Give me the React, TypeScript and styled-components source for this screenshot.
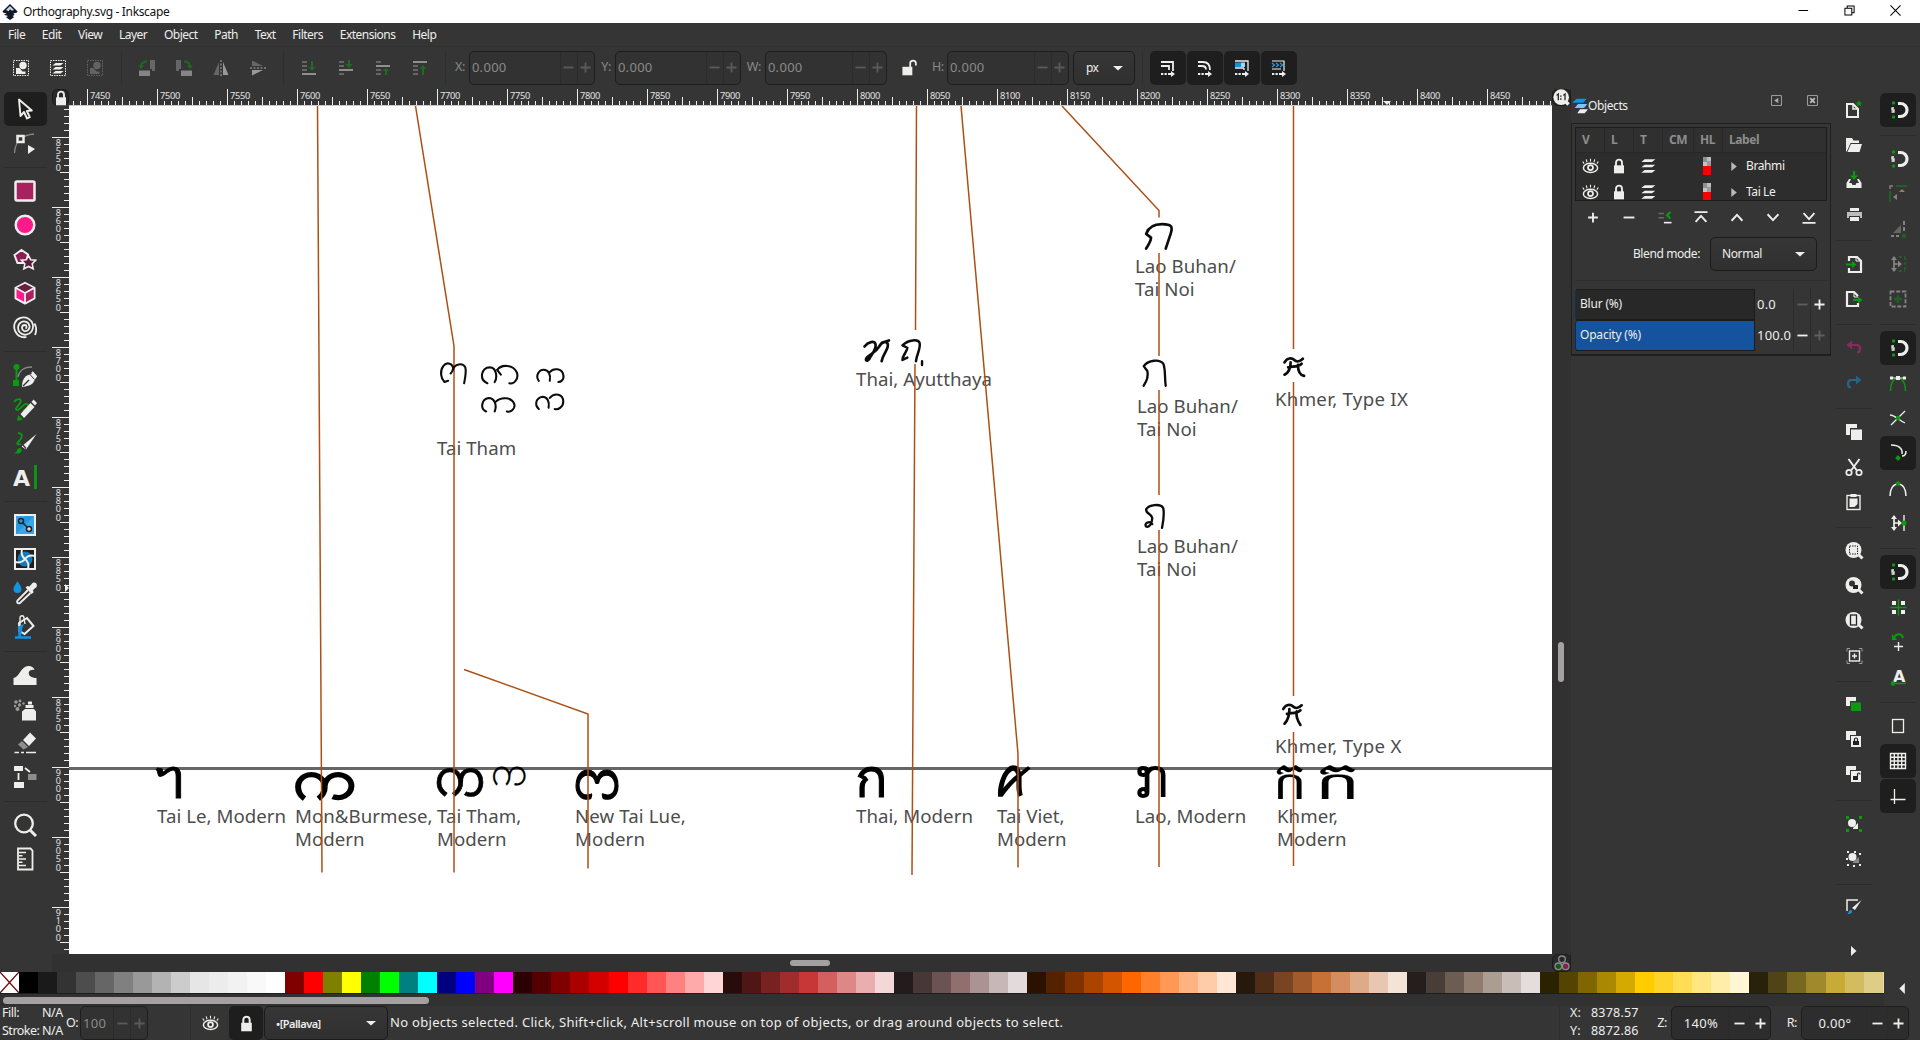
import React from "react";
import styled, { createGlobalStyle, css } from "styled-components";

const GlobalStyle = createGlobalStyle`
  * { box-sizing: border-box; }
  body { margin: 0; background: #353535; overflow: hidden; }
`;

const UI = `"Noto Sans", "Open Sans", sans-serif`;
const W = "#eeeeec";
const GR = "#0a9a10";
const DIM = "#6a6a6a";

const Window = styled.div`
  width: 1920px; height: 1040px; display: flex; flex-direction: column;
  background: #353535; color: ${W}; font: 12px/1 ${UI}; letter-spacing: -0.4px; overflow: hidden; white-space: nowrap;
`;
const Ico = styled.svg<{ $s?: number; $dim?: boolean }>`
  display: block; flex: none; width: ${p => p.$s ?? 24}px; height: ${p => p.$s ?? 24}px;
  opacity: ${p => (p.$dim ? 0.42 : 1)}; fill: none; stroke: none;
`;
const I = ({ s, dim, children }: { s?: number; dim?: boolean; children: React.ReactNode }) => (
  <Ico viewBox="0 0 24 24" $s={s} $dim={dim}>{children}</Ico>
);

/* ---------- title and menu ---------- */
const TitleBar = styled.header`
  height: 23px; flex: none; background: #fff; color: #111; display: flex; align-items: center; padding-left: 2px; letter-spacing: -0.350px;
`;
const TitleText = styled.span`margin-left: 5px; flex: 1;`;
const WinButton = styled.div`width: 46px; height: 23px; display: flex; align-items: center; justify-content: center; padding: 0 3px 3px 0;`;
const MenuBar = styled.nav`
  height: 24px; flex: none; display: flex; align-items: center; gap: 16.650px; padding-left: 8px; border-bottom: 1px solid #303030;
  letter-spacing: -0.500px;
`;

/* ---------- tool controls bar ---------- */
const ControlBar = styled.div`height: 42px; flex: none; display: flex; align-items: center; padding: 0 0 1px 2px;`;
const Slot = styled.div<{ $w: number }>`width: ${p => p.$w}px; display: flex; justify-content: center; flex: none;`;
const VSep = styled.div<{ $l?: number; $r?: number; $h?: number }>`
  width: 1px; height: ${p => p.$h ?? 34}px; background: #2e2e2e; flex: none; margin: 0 ${p => p.$r ?? 7}px 0 ${p => p.$l ?? 7}px;
`;
const SpinBox = styled.div<{ $w: number; $dim?: boolean; $fill?: boolean }>`
  width: ${p => p.$w}px; height: 34px; flex: none; display: flex; align-items: stretch; border: 1px solid #1e1e1e; border-radius: 5px;
  background: ${p => (p.$fill ? "#2d2d2d" : "#323232")}; color: ${p => (p.$dim ? "#8a8a89" : W)}; font-size: 13px; letter-spacing: 0.3px;
`;
const SpinValue = styled.span<{ $center?: boolean }>`
  flex: 1; display: flex; align-items: center; padding-left: 2px; justify-content: ${p => (p.$center ? "center" : "flex-start")};
`;
const SpinKey = styled.span<{ $w: number }>`
  width: ${p => p.$w}px; display: flex; align-items: center; justify-content: center; border-left: 1px solid #2b2b2b;
`;
const FieldLabel = styled.label<{ $w: number; $dim?: boolean }>`
  width: ${p => p.$w}px; flex: none; text-align: right; padding-right: 4px; font-size: 12.5px; color: ${p => (p.$dim ? "#8a8a89" : W)};
`;
const Combo = styled.div<{ $w: number; $pad?: number }>`
  width: ${p => p.$w}px; height: 34px; flex: none; display: flex; align-items: center; justify-content: space-between;
  padding: 0 11px 0 ${p => p.$pad ?? 12}px; border: 1px solid #1b1b1b; border-radius: 5px; background: linear-gradient(#363636, #303030);
`;
const Toggle = styled.div<{ $w: number; $h: number }>`
  width: ${p => p.$w}px; height: ${p => p.$h}px; flex: none; display: flex; align-items: center; justify-content: center;
  border-radius: 5px; background: #1e1e1e;
`;
const ToggleRow = styled.div`display: flex; gap: 1px;`;

const Minus = ({ c = W }: { c?: string }) => <I s={11}><path d="M1 12h22" stroke={c} strokeWidth="4" /></I>;
const Plus = ({ c = W }: { c?: string }) => <I s={11}><path d="M1 12h22M12 1v22" stroke={c} strokeWidth="4" /></I>;
const Down = () => <I s={10}><path d="M0 7h24L12 18z" fill={W} /></I>;
const Spin = ({ w, v, kw, dim, center, fill }: { w: number; v: string; kw: number; dim?: boolean; center?: boolean; fill?: boolean }) => (
  <SpinBox $w={w} $dim={dim} $fill={fill}>
    <SpinValue $center={center}>{v}</SpinValue>
    <SpinKey $w={kw}><Minus c={dim ? "#5a5a5a" : W} /></SpinKey>
    <SpinKey $w={kw}><Plus c={dim ? "#5a5a5a" : W} /></SpinKey>
  </SpinBox>
);

const SelAll = () => <><rect x="4.500" y="4.500" width="15" height="15" stroke={W} strokeDasharray="1.500 1" /><circle cx="14" cy="9.500" r="3.700" fill={W} /><path d="M7 12h3.500l3 3.500h3v2.500H7z" fill={W} /></>;
const topIcons1 = [
  <I><SelAll /></I>,
  <I><rect x="4.500" y="4.500" width="15" height="15" stroke={W} strokeDasharray="1.500 1" /><path d="M9.500 7h8l-3 2.500h-8zM9.500 11h8l-3 2.500h-8zM9.500 15h8l-3 2.500h-8z" fill={W} /></I>,
  <I dim><g opacity=".6"><SelAll /></g></I>,
];
const rotL = <><path d="M4 14.500h11V20H4z" fill="#858585" /><path d="M15 4h5v11h-3v-2h-2z" fill="#666" /><path d="M6 11c0-4 2-5.500 6-5.500" stroke="#1d6a22" strokeWidth="2" /><path d="M3 9.500h6.500L6 13z" fill="#1d6a22" /></>;
const topIcons2 = [
  <I>{rotL}</I>,
  <I><g transform="matrix(-1 0 0 1 24 0)">{rotL}</g></I>,
  <I><path d="M10 6v13H4.500z" fill="#666" /><path d="M14 6v13h5.500z" fill="#999" /><path d="M12 4v16" stroke="#aaa" strokeDasharray="2 1.500" /></I>,
  <I><path d="M6 4.500V10h11z" fill="#666" /><path d="M6 19.500V14h11z" fill="#999" /><path d="M4 12h17" stroke="#aaa" strokeDasharray="2 1.500" /></I>,
];
const stack = (a: string, b: string, arrow: string) => <I><path d={b} fill="#666" /><path d={a} fill="#8f8f8f" /><path d={arrow} fill="#1f6a24" /></I>;
const topIcons3 = [
  stack("M5 17h14v2H5z", "M5 5h5v2H5zM5 9h5v2H5zM5 13h5v2H5z", "M14 5h2v6h2.500L15 15l-3.500-4H14z"),
  stack("M5 13h14v2H5z", "M5 5h5v2H5zM5 9h5v2H5zM5 17h5v2H5z", "M14 4h2v4h2.500L15 12l-3.500-4H14z"),
  stack("M5 9h14v2H5z", "M5 5h5v2H5zM5 13h5v2H5zM5 17h5v2H5z", "M14 19h2v-4h2.500L15 12l-3.500 3H14z"),
  stack("M5 5h14v2H5z", "M5 9h5v2H5zM5 13h5v2H5zM5 17h5v2H5z", "M14 19h2v-6h2.500L15 9l-3.500 4H14z"),
];
const dots = <><path d="M5 17h2.300v2H5zM8.500 17h2.300v2H8.500z" fill={W} /><path d="M12 17h3v-2l4 3-4 3v-2h-3z" fill={W} /></>;
const affect = [
  <I><path d="M5 6h12v9M5 10h8v4" stroke={W} strokeWidth="1.800" />{dots}</I>,
  <I><path d="M5 6h5c5 0 7 3 7 8M5 10h4c3 0 4 1.500 4 3.500" stroke={W} strokeWidth="1.800" />{dots}</I>,
  <I><path d="M5 5h13v10M14 12v2M5 12h9" stroke={W} strokeWidth="1.300" /><rect x="5" y="6.500" width="6" height="4.500" fill="#1193e0" /><rect x="11" y="6.500" width="4" height="4.500" fill="#9fd3f2" />{dots}</I>,
  <I><path d="M5 5h12v10M5 13h9" stroke={W} strokeWidth="1.200" /><path d="M5 7l2.500 2L5 11M9 7l2.500 2L9 11M13 7l2.500 2L13 11" stroke="#2b9be8" strokeWidth="1.200" />{dots}</I>,
];

/* ---------- main area ---------- */
const Main = styled.main`flex: 1; display: flex; min-height: 0;`;
const Toolbox = styled.aside`width: 52px; flex: none; display: flex; flex-direction: column; padding: 3px 0 0 4px;`;
const ToolButton = styled.div<{ $on?: boolean }>`
  width: 43px; height: 34px; flex: none; display: flex; align-items: center; justify-content: center; border-radius: 5px; padding-right: 1px;
  ${p => p.$on && css`background: #1e1e1e;`}
`;
const HSep = styled.div<{ $w?: number }>`
  width: ${p => p.$w ?? 43}px; height: 14px; flex: none; display: flex; align-items: center;
  &::after { content: ""; flex: 1; height: 1px; background: #2c2c2c; }
`;
const ColGap = styled.div`height: 8px; flex: none;`;

const tools: (React.ReactNode | null)[] = [
  <I><path d="M6 2.500L7.500 19l3.500-4 3 6.500 2.800-1.300-3-6.200 5-.5z" stroke={W} strokeWidth="1.900" strokeLinejoin="round" /></I>,
  <I><path d="M1.500 22C2 11 9 4 21 3" stroke="#888" strokeWidth="1.300" /><rect x="4.500" y="5" width="6" height="6" stroke={W} strokeWidth="2.500" fill="#353535" /><path d="M15 14l7 4-7 5z" fill={W} /></I>,
  null,
  <I><rect x="2.500" y="2.500" width="19" height="19" rx="1.500" fill="#a8225f" stroke={W} strokeWidth="2.500" /></I>,
  <I><circle cx="12" cy="12" r="9.300" fill="#ff1a8c" stroke={W} strokeWidth="2.500" /></I>,
  <I><path d="M8.500 3L15 7.500 13 16H4.500L1.500 8z" fill="#8c1d56" stroke={W} strokeWidth="2" /><path d="M15.500 8.500l2.200 4.200 5 .5-3.500 3.600 1 5-4.700-2.300-4.600 2.300.9-5-3.500-3.600 5-.5z" fill="#5c1c3e" stroke={W} strokeWidth="1.600" /></I>,
  <I><path d="M12 1.800l9.500 5v10.500L12 22.500l-9.500-5.200V6.800z" fill="#ff1a8c" stroke={W} strokeWidth="2" strokeLinejoin="round" /><path d="M12 2.800l8.500 4.200L12 11.500 3.500 7z" fill="#6a1f45" /><path d="M13 12.500l7.500-4v8.300L13 21z" fill="#a8225f" /><path d="M3 7l9 5 9-5M12 12v10" stroke={W} strokeWidth="1.800" /></I>,
  <I><path d="M12.500 13.500c1.500-.5 1.500-3.500-.8-3.500-3.200 0-3.700 4.500-.7 5.800 3.500 1.200 6-1.800 5.500-4.800C15.800 7 11.500 5.500 8.500 7 4.500 9 4 14.500 7 17.700 10.500 21 16 20 18.500 16.500c3-4.500 1.500-10-3-12.700C10.500 1 4 2.800 1.800 8 0 13 2.500 19.500 7.500 21.500c2 .8 4 1 6 .5M22 20c1.500-3.500 1.500-8-.5-11.500" stroke={W} strokeWidth="1.800" /></I>,
  null,
  <I><path d="M3.500 5v14" stroke={GR} strokeWidth="2" /><circle cx="3.500" cy="4" r="3" fill={GR} /><path d="M0 17h6v6H0z" fill={GR} /><path d="M5 14C6 8 11 4 19 4" stroke="#888" strokeWidth="1.300" /><path d="M9 24c0-5 1-8 4-11l7-3 3.500 4-3.500 6c-3 3-6 3-11 4z" fill={W} /><path d="M10 23l6-6" stroke="#353535" strokeWidth="1.500" /><path d="M18 10l-1.500 1 5 5.500" stroke="#353535" strokeWidth="1" /><path d="M19 9l4.500 5" stroke={W} strokeWidth="2" /></I>,
  <I><path d="M1 5c3-4 9-4 6 1s-6 6-3 7 7-8 10-6-1 5-4 7" stroke={GR} strokeWidth="1.800" /><path d="M4 24l1-6 5 4.500z" fill={GR} /><path d="M7.500 17L17.500 6l4 4L11 21z" fill={W} /><path d="M18.500 5l2-2.500 3.500 3.500-2 2.500z" fill={W} /></I>,
  <I><path d="M5 2c6 1 4 5 1 8s-2 4 2 3" stroke={GR} strokeWidth="1.800" /><path d="M1 22c4 0 2-5 6-5 3 1 2 5-2 5.500H1z" fill={GR} /><path d="M8.500 15.500L23.500 3 13 18.500z" fill={W} /><path d="M10 14l3 3.500" stroke="#353535" strokeWidth="1.200" /></I>,
  <I><path d="M22.500 0v24" stroke={GR} strokeWidth="2.800" /><text x="0" y="20.500" fontFamily="DejaVu Sans" fontWeight="700" fontSize="22" fill={W}>A</text></I>,
  null,
  <I><rect x="2" y="2" width="20" height="20" fill="#3aa5ea" stroke={W} strokeWidth="2" /><path d="M3 21V12L12 3h9z" fill="#1193e0" opacity=".6" /><circle cx="8" cy="8" r="2.500" stroke="#222" strokeWidth="1.500" /><circle cx="16" cy="16" r="2.500" fill="#ddd" stroke="#222" strokeWidth="1.500" /><path d="M10 10l4 4" stroke="#222" strokeWidth="1.500" /></I>,
  <I><rect x="2" y="2" width="20" height="20" fill="#1e1e1e" stroke={W} strokeWidth="2" /><circle cx="12" cy="12" r="7.500" fill="#1579b8" /><path d="M9 2c-1 4-1 7 3 10s4 6 3 10M2 15c4 1 7 1 10-3s6-4 10-3" stroke={W} strokeWidth="2" /></I>,
  <I><path d="M4.500 0c3 5 4 6 4 8a4 4 0 01-8 0c0-2 1-3 4-8z" fill="#1193e0" /><path d="M15 9L4.500 19.500c-1 2 0 3.500 2.500 2.500L17.500 12" stroke={W} strokeWidth="1.900" /><path d="M12.500 6.500l2-1.500 2 .5 3-3.500c3-1.500 5.500 1.500 4 4l-3.500 3 .5 2.500-2 1.500z" fill={W} /></I>,
  <I><path d="M6 8l8-5 6.500 8-9 8-5-3z" stroke={W} strokeWidth="2" /><path d="M7 11V3c0-3 4-3 4 0l1 6" stroke={W} strokeWidth="1.400" /><path d="M5 11.500L11 9l-2 5-1 8H5.500z" fill="#1193e0" /><path d="M2 22.500h16" stroke="#1193e0" strokeWidth="2.500" /></I>,
  null,
  <I><path d="M.5 22v-7C7 14 7 4 15 3c4 0 6 2 6.500 4-5-1-7.500 3-4.500 6 2 1.500 4 2 6.500 2v7z" fill={W} /></I>,
  <I><path d="M9 23.500v-9l3-2.500h9l2 2.500v9zM12.500 8h8v3h-8zM15 4.500h4v3h-4z" fill={W} /><g fill="#999"><circle cx="3" cy="5" r="1.800" /><circle cx="7" cy="4" r="1.400" /><circle cx="4.500" cy="12" r="2" /><circle cx="6.500" cy="8" r="1.700" /><circle cx="10.500" cy="6.500" r="1.200" /><circle cx="2" cy="9" r="1.200" /></g></I>,
  <I><path d="M10 9l7-7.500 6 6-7 7.500z" fill={W} /><path d="M9 10l6 6-4.500 2.500-5.500-5z" fill="#8d8d8d" /><path d="M1.500 21.500H6M8 21.500h3M13 21.500h10" stroke={W} strokeWidth="1.700" /></I>,
  <I><path d="M1 1h9v5H1zM1 17h10v6H1z" fill={W} /><path d="M5.500 8v7M12 3l5 4" stroke={W} strokeWidth="1.800" /><rect x="15" y="9" width="8.500" height="6" fill="#8d8d8d" /></I>,
  null,
  <I><circle cx="11" cy="10.500" r="8.800" stroke={W} strokeWidth="2.300" /><path d="M17 17l6 6" stroke={W} strokeWidth="3" /></I>,
  <I><path d="M5 1.500h12.500l2 2v19H5z" stroke={W} strokeWidth="1.800" /><path d="M6 5.500h7M6 8.800h3.500M6 12h7M6 15.300h3.500M6 18.500h7" stroke={W} strokeWidth="1.500" /></I>,
];

const CanvasArea = styled.section`width: 1519px; flex: none; display: grid; grid-template-columns: 17px 1483px 19px; grid-template-rows: 17px 848px 18px; border-right: 1px solid #222;`;
const Corner = styled.div`display: flex; align-items: center; justify-content: center; background: #292929; border: 1px solid #1c1c1c; border-radius: 5px;`;
const HRuler = styled.div`display: flex; overflow: hidden; position: relative; border-bottom: 1px solid #c9c9c9;`;
const HCell = styled.div`
  width: 70px; flex: none; height: 17px; font-size: 9.300px; letter-spacing: -0.350px; padding: 2px 0 0 3px; color: #e2e2e2;
  background:
    linear-gradient(${W}, ${W}) 0 0 / 1px 17px no-repeat,
    linear-gradient(${W}, ${W}) 35px 8px / 1px 9px no-repeat,
    repeating-linear-gradient(90deg, ${W} 0 1px, transparent 1px 7px) 0 12px / 70px 5px no-repeat;
  &:first-child { margin-left: -52px; }
`;
const VRuler = styled.div`display: flex; flex-direction: column; overflow: hidden; position: relative;`;
const VCell = styled.div`
  height: 70px; flex: none; width: 17px; font-size: 9px; line-height: 8.200px; padding: 2px 5px 0 0; color: #e2e2e2; display: flex; flex-direction: column; align-items: center;
  background:
    linear-gradient(${W}, ${W}) 0 0 / 17px 1px no-repeat,
    linear-gradient(${W}, ${W}) 8px 35px / 9px 1px no-repeat,
    repeating-linear-gradient(180deg, ${W} 0 1px, transparent 1px 7px) 12px 0 / 5px 70px no-repeat;
  &:first-child { margin-top: -39px; }
`;
const HMark = styled.i`position: absolute; left: 1314px; bottom: 0; border: 4px solid transparent; border-top-color: ${W}; border-bottom: 0;`;
const VMark = styled.i`position: absolute; top: 478px; right: 0; border: 4px solid transparent; border-left-color: ${W}; border-right: 0;`;
const Scroll = styled.div<{ $v?: boolean }>`
  background: #313131; display: flex; ${p => p.$v ? css`padding: 536px 0 0 6px;` : css`padding: 6px 0 0 721px;`}
`;
const Thumb = styled.div<{ $w: number; $h: number }>`width: ${p => p.$w}px; height: ${p => p.$h}px; border-radius: 4px; background: #a3a1a1;`;

const Page = styled.div`background: #fff; position: relative; overflow: hidden; letter-spacing: 0;`;
const Strokes = styled.svg`position: absolute; inset: 0; width: 1483px; height: 848px; fill: none;`;
const Note = styled.div<{ $x: number; $y: number; $ls?: number }>`
  position: absolute; left: ${p => p.$x - 69}px; top: ${p => p.$y - 107}px; color: #4d4d4d; font: 18.667px/23.333px "Noto Sans", sans-serif; white-space: pre;
  letter-spacing: ${p => p.$ls ?? 0.04}px;
`;
const Letter = styled.div<{ $x: number; $y: number; $s: number; $b?: number; $sx?: number }>`
  position: absolute; left: ${p => p.$x - 69}px; top: ${p => p.$y - 106}px; color: #000; line-height: 80px; height: 80px;
  font-family: "Noto Sans", sans-serif; font-size: ${p => p.$s}px; -webkit-text-stroke: ${p => p.$b ?? 0}px #000;
  transform: scaleX(${p => p.$sx ?? 1}); transform-origin: 0 50%;
`;
const notes: [number, number, string, number?][] = [
  [437, 437, "Tai Tham"], [856, 368, "Thai, Ayutthaya"], [1135, 255, "Lao Buhan/\nTai Noi"], [1137, 395, "Lao Buhan/\nTai Noi"],
  [1137, 535, "Lao Buhan/\nTai Noi"], [1275, 388, "Khmer, Type IX", 0.28], [1275, 735, "Khmer, Type X", 0.3],
  [157, 805, "Tai Le, Modern"], [295, 805, "Mon&Burmese,\nModern"], [437, 805, "Tai Tham,\nModern"], [575, 805, "New Tai Lue,\nModern", 0.1],
  [856, 805, "Thai, Modern"], [997, 805, "Tai Viet,\nModern"], [1135, 805, "Lao, Modern"], [1277, 805, "Khmer,\nModern"],
];
const letters: [number, number, number, string, number, number?][] = [
  [155, 736, 57, "ᥐ", 0.9], [293, 736, 56, "က", 2.400, 1.150], [433, 736, 51, "ᨠ", 0.7], [491, 729, 41, "က", 0.200, 0.900], [574, 736, 61, "ᦂ", 1.200],
  [855, 736, 54, "ก", 1], [993, 736, 53, "ꪁ", 1.500, 0.860], [1134, 736, 54, "ກ", 0, 0.960], [1273, 739, 53, "ក", 0.200], [1315, 739, 53, "ក", 0.200, 1.350],
];

const objectsIcon = <I s={16}><path d="M7 1h15l-5 6H0z" fill="#1193e0" /><path d="M9 9h14l-5 6H4z" fill="#7cc4f0" /><path d="M12 17h12l-5 6H8z" fill={W} /></I>;
const Eye = <I s={17}><ellipse cx="12" cy="14" rx="10" ry="6.500" stroke={W} strokeWidth="2" /><circle cx="12" cy="13.500" r="3.500" stroke={W} strokeWidth="2.500" /><path d="M3 8L1 5M7 6L6 2M12 5V1M17 6l1-4M21 8l2-3" stroke={W} strokeWidth="1.500" /></I>;
const Lock = ({ s = 16 }: { s?: number }) => <I s={s}><path d="M4.500 11h15v12h-15z" fill={W} /><path d="M7.500 12V7c0-6 9-6 9 0v5" stroke={W} strokeWidth="2.800" /></I>;
const LayersIco = <I s={16}><path d="M7 2h16l-5 4H2zM7 10h16l-5 4H2zM7 18h16l-5 4H2z" fill={W} /></I>;

const Dock = styled.aside`width: 260px; flex: none; padding-top: 3px;`;
const DockHead = styled.div`height: 31px; display: flex; align-items: center; padding: 0 13px 4px 1px;`;
const Grow = styled.span`flex: 1;`;
const DockBtns = styled.div`display: flex; gap: 25px; padding-bottom: 10px;`;
const DockBody = styled.div`height: 233px; border: 1px solid #1f1f1f; border-width: 1px 1px 2px; padding: 3px; display: flex; flex-direction: column;`;
const Tree = styled.div`height: 74px; border: 1px solid #1c1c1c; background: #2d2d2d; overflow: hidden; flex: none;`;
const TreeRow = styled.div<{ $head?: boolean }>`
  display: grid; grid-template-columns: 29px 29px 29px 31px 29px 1fr; height: ${p => (p.$head ? 25 : 26)}px; align-items: center;
  ${p => p.$head && css`color: #8d8d8c; font-weight: 700; background: #303030; border-bottom: 1px solid #282828;`}
`;
const Cell = styled.div<{ $head?: boolean }>`
  height: 100%; display: flex; align-items: center; padding-left: 6px;
  ${p => p.$head && css`border-right: 1px solid #282828; &:last-child { border: 0; }`}
`;
const Swatch = styled.div<{ $c: string }>`
  width: 8px; height: 18px; margin-left: 3px;
  background: linear-gradient(${p => p.$c}, ${p => p.$c}) 0 9px / 8px 9px no-repeat, conic-gradient(#bdbdbd 25%, #9a9a9a 0 50%, #c4c4c4 0 75%, #8f8f8f 0) 0 0 / 8px 9px no-repeat;
`;
const RowName = styled.span`margin-left: 6px;`;
const LayerButtons = styled.div`display: flex; height: 33px; & > * { width: 36px; height: 33px; padding: 10px 11px; }`;
const BlendRow = styled.div`display: flex; align-items: center; justify-content: flex-end; gap: 10px; padding-right: 10px; margin-top: 3px; height: 36px;`;
const Rule = styled.div`height: 1px; background: #2d2d2d; margin: 8px 0 8px; flex: none;`;
const SliderRow = styled.div`display: flex; height: 32px;`;
const SliderBar = styled.div<{ $on?: boolean }>`
  width: 180px; height: 31px; border: 1px solid #1c1c1c; border-radius: 3px 0 0 3px; padding-left: 4px; display: flex; align-items: center; font-size: 12px; letter-spacing: -0.200px;
  background: ${p => (p.$on ? "#15539e" : "#282828")}; border-left-color: ${p => (p.$on ? "#0b2c55" : "#0d2f5a")};
`;
const SliderNum = styled.span`width: 38px; padding-left: 2px; display: flex; align-items: center; font-size: 13px; letter-spacing: 0.200px;`;

const BarCol = styled.aside<{ $w: number; $p: number }>`width: ${p => p.$w}px; flex: none; display: flex; flex-direction: column; padding: 4px 0 0 ${p => p.$p}px;`;
const BarBtn = styled.div<{ $on?: boolean }>`
  width: 36px; height: 35px; flex: none; display: flex; align-items: center; justify-content: center;
  background: ${p => (p.$on ? "#1e1e1e" : "none")}; background-clip: padding-box; border: solid transparent; border-width: 0 0 1px; border-radius: 5px;
`;

const magnify = <><circle cx="11.500" cy="11" r="8" fill={W} /><path d="M17 16l3.500 3.500" stroke={W} strokeWidth="3" /></>;
const cmds: (React.ReactNode | null)[] = [
  <I><path d="M5 6h6l5 5v8H5z" stroke={W} strokeWidth="2" /><path d="M11 6v5h5" stroke={W} strokeWidth="1.500" /><path d="M17 2l1 2.500h2.500L18.500 6l1 2.500-2.500-1.500-2.500 1.500 1-2.500-2-1.500H16z" fill={GR} /></I>,
  <I><path d="M4 19V5h6l1.500 2.500H17V10H8.500L5.500 17z" fill={W} /><path d="M9 11h11l-2.500 8H5.500z" fill={W} /></I>,
  <I><path d="M12 3v5" stroke={GR} strokeWidth="2.200" /><path d="M8 7.500h8L12 12z" fill={GR} /><path d="M7 11l-2.500 4v5h15v-5L17 11h-2l2 4h-2.500l-1 2h-3l-1-2H7l2-4z" fill={W} /></I>,
  <I><path d="M8 5h9v3H8z" fill={W} /><path d="M5 9h15v6h-2v-2H7v2H5z" fill="#bdbdbd" /><path d="M8 14h9v4H8z" fill={W} /></I>,
  null,
  <I><path d="M7 9V5h8l4 4v11H7v-4" stroke={W} strokeWidth="2.200" /><path d="M14 4v5h5" stroke={W} /><path d="M4 12.500h7" stroke={GR} strokeWidth="2" /><path d="M10 9l4.500 3.500L10 16z" fill={GR} /></I>,
  <I><path d="M16 9l-4-4H5v14h11v-3" stroke={W} strokeWidth="2.200" /><path d="M12 5v5h4" stroke={W} /><path d="M11 13h6" stroke={GR} strokeWidth="2" /><path d="M16 9.500l4.500 3.500L16 16.500z" fill={GR} /></I>,
  null,
  <I><path d="M9 9h6c4 0 4 7.500 0 7.500" stroke="#8b2a5e" strokeWidth="2.200" /><path d="M10 4.500v9L4.500 9z" fill="#8b2a5e" /></I>,
  <I><path d="M15 9H9c-4 0-4 7.500 0 7.500" stroke="#22668c" strokeWidth="2.200" /><path d="M14 4.500v9L19.500 9z" fill="#22668c" /></I>,
  null,
  <I><path d="M4 4h11v4H8v7H4z" fill={W} /><path d="M9 9.500h11V20H9z" fill={W} /></I>,
  <I><path d="M6.500 4l8 11M17.500 4l-8 11" stroke={W} strokeWidth="1.900" /><circle cx="7" cy="17.500" r="2.700" stroke={W} strokeWidth="1.700" /><circle cx="17" cy="17.500" r="2.700" stroke={W} strokeWidth="1.700" /></I>,
  <I><rect x="5" y="5.500" width="13" height="14" stroke={W} strokeWidth="1.400" /><path d="M8.500 4h6v3h-6z" fill={W} /><path d="M7.500 8.500h8V14l-3 3h-5z" fill={W} /></I>,
  null,
  <I>{magnify}<rect x="7.500" y="7" width="8" height="8" stroke="#222" strokeDasharray="1.500 1" /></I>,
  <I>{magnify}<circle cx="10" cy="9.500" r="3" fill="#333" /><path d="M11 11h5v4h-5z" fill="#222" /></I>,
  <I>{magnify}<rect x="8.500" y="6" width="6" height="10" stroke="#222" strokeWidth="1.300" /></I>,
  <I><rect x="7.500" y="7" width="10" height="10" stroke={W} strokeWidth="1.400" /><path d="M12.500 9.500v5M10 12h5" stroke={W} strokeWidth="1.400" /><path d="M5 7.500v-3h3M17 4.500h3v3M20 16.500v3h-3M8 19.500H5v-3" stroke="#999" /></I>,
  null,
  <I><path d="M4 4h10v4H8v5H4z" fill={W} /><path d="M9 9.500h10V18H9z" fill={GR} /></I>,
  <I><path d="M4 3h10v4H8v5H4z" fill={W} /><path d="M9 8h10v11H9z" fill={W} /><path d="M11 13h6v4h-6z" fill="#222" /><path d="M12.500 13v-1.500c0-2 3-2 3 0V13" stroke="#222" strokeWidth="1.200" /></I>,
  <I><path d="M4 3h10v4H8v5H4z" fill={W} /><path d="M9 8h10v11H9z" fill={W} /><path d="M11 13h5v4h-5z" fill="#222" /><path d="M15.500 13v-1.500c0-2 2.500-2 2.500 0" stroke="#222" strokeWidth="1.200" /></I>,
  null,
  <I><path d="M4 4h3v3H4zM17 4h3v3h-3zM4 17h3v3H4zM17 17h3v3h-3z" fill={GR} /><circle cx="10" cy="11" r="4" fill={W} /><path d="M11 16l5-5v6h-5z" fill={W} /></I>,
  <I><path d="M5 4h2v2H5zM12 4h2v2h-2zM17 6h2v2h-2zM4 11h2v2H4zM5 17h2v2H5zM11 18h2v2h-2zM17 17h2v2h-2z" fill={W} /><circle cx="10.500" cy="10" r="4" fill={W} /><path d="M11 15l6-5v6h-6z" fill="#888" /></I>,
  null,
  <I><path d="M16 4H5v11" stroke={W} strokeWidth="1.500" /><path d="M10 12l9.500-8L13 14z" fill={W} /><path d="M5 18c2 0 1-4 4-4 2 1 1 4-2 4z" fill="#1193e0" /></I>,
];
const magnet = <><path d="M12 5.500h2.500a6.500 6.500 0 010 13H12" stroke={W} strokeWidth="3.200" /><circle cx="7.500" cy="5" r="1.700" fill={GR} /><circle cx="7.500" cy="19" r="1.700" fill={GR} /><path d="M8 10H6v2h2v2H5.500" stroke={W} strokeWidth="1.300" /></>;
const arrows = <><path d="M8 5v14M8 12h7" stroke={W} strokeWidth="1.700" /><path d="M5 8l3-4 3 4zM5 16l3 4 3-4zM12 8.500l4 3.500-4 3.500z" fill={W} /></>;
const snaps: ([React.ReactNode, boolean?] | null)[] = [
  [<I>{magnet}</I>, true], null, [<I>{magnet}</I>],
  [<I dim><path d="M10 4h11M4 9v11" stroke={GR} strokeWidth="2" /><path d="M4 7V4h3" stroke={W} strokeWidth="1.500" /><path d="M13 10l3-3 3 3zM11 12v6l-4-3z" fill={W} /></I>],
  [<I dim><path d="M5 19h8" stroke={W} strokeWidth="2" strokeDasharray="3 2" /><path d="M18 4v10" stroke={W} strokeWidth="2" strokeDasharray="4 2" /><path d="M15 8v8H7z" fill="#aaa" /><circle cx="18" cy="19" r="2.300" fill={GR} /></I>],
  [<I dim>{arrows}<path d="M13 5h6M13 19h6M19 5v14" stroke={GR} strokeWidth="1.800" strokeDasharray="3 2" /></I>],
  [<I dim><rect x="4.500" y="4.500" width="15" height="15" stroke={W} strokeWidth="1.800" strokeDasharray="4 1.700" /><path d="M12 8v8M8 12h8" stroke={GR} strokeWidth="2.300" /></I>],
  null, [<I>{magnet}</I>, true],
  [<I><path d="M4.500 20c0-8 3-12.500 7.500-12.500S19.500 12 19.500 20" stroke={GR} strokeWidth="1.500" /><path d="M6 7h12" stroke={W} /><path d="M10 5h4v4h-4zM4 5.500h3v3H4zM17 5.500h3v3h-3z" fill={W} /></I>],
  [<I><path d="M5 19L19 5M4 9c5 0 8 5 15 8" stroke={W} strokeWidth="1.300" /><circle cx="12" cy="12" r="2.300" fill={GR} /></I>],
  [<I><path d="M5 4c8 0 12 4 11 9M20 10c0 3-1 5-4 5" stroke={W} strokeWidth="1.500" /><path d="M12 14l2.800 3-2.800 3-2.800-3z" fill={GR} /></I>, true],
  [<I><path d="M4 20c0-7 3-12 8-12s8 5 8 12" stroke={W} strokeWidth="1.500" /><circle cx="12" cy="7.500" r="2.200" fill={GR} /></I>],
  [<I>{arrows}<path d="M18 4v16" stroke={W} strokeWidth="1.400" /><circle cx="18" cy="12" r="2.600" fill={GR} /></I>],
  null, [<I>{magnet}</I>, true],
  [<I><path d="M6 6h4v4H6zM15 6h4v4h-4zM6 15h4v4H6zM15 15h4v4h-4z" fill={W} /><path d="M4.500 12.500h16M12.500 4.500v16" stroke={GR} strokeWidth="1.400" /></I>],
  [<I><path d="M8 8c2-5 8-5 9 0" stroke={GR} strokeWidth="2" /><path d="M6 4v6h5z" fill={GR} /><path d="M8 16.500h9M12.500 12v9" stroke={W} strokeWidth="1.400" /></I>],
  [<I><text x="7" y="17" fontFamily="DejaVu Sans" fontWeight="700" fontSize="16" fill={W}>A</text><path d="M6 18.500h14" stroke={GR} strokeWidth="1.400" /><circle cx="7" cy="18.500" r="2.300" fill={GR} /></I>],
  null, [<I><rect x="6.500" y="5.500" width="11" height="13" stroke={W} strokeWidth="1.300" /></I>],
  [<I><path d="M4.500 4.500h15v15h-15zM4.500 8.300h15M4.500 12h15M4.500 15.700h15M8.300 4.500v15M12 4.500v15M15.700 4.500v15" stroke={W} strokeWidth="1.400" /></I>, true],
  [<I><path d="M8.500 5v15M4.500 15.500h15" stroke={W} strokeWidth="1.300" /></I>, true],
];

/* ---------- palette and status ---------- */
const PaletteRow = styled.div`height: 34px; flex: none; display: flex;`;
const PaletteCol = styled.div`width: 1884px; background: #313131;`;
const Chips = styled.div`height: 22px; display: flex; overflow: hidden; border-bottom: 1px solid #1d1d1d;`;
const Chip = styled.div<{ $c: string }>`width: 19.020px; flex: none; background: ${p => p.$c};`;
const NoneChip = styled.svg`width: 19.020px; height: 21px; flex: none; display: block;`;
const PaletteThumb = styled.div`width: 426px; height: 7px; margin: 3px 0 0 3px; border-radius: 4px; background: #a3a1a1;`;
const PaletteMenu = styled.div`flex: 1; display: flex; align-items: center; justify-content: center; padding-bottom: 2px;`;
const palette = ("000000 1a1a1a 333333 4d4d4d 666666 808080 999999 b3b3b3 cccccc e6e6e6 ececec f2f2f2 f9f9f9 ffffff 800000 ff0000 808000 ffff00 008000 00ff00 008080 00ffff 000080 0000ff 800080 ff00ff " +
  "2b0000 550000 800000 aa0000 d40000 ff0000 ff2a2a ff5555 ff8080 ffaaaa ffd5d5 280b0b 501616 782121 a02c2c c83737 d35f5f de8787 e9afaf f4d7d7 241c1c 483737 6c5353 916f6f ac9393 c8b7b7 e3dbdb " +
  "2b1100 552200 803300 aa4400 d45500 ff6600 ff7f2a ff9955 ffb380 ffccaa ffe6d5 28170b 502d16 784421 a05a2c c87137 d38d5f deaa87 e9c6af f4e3d7 241f1c 483e37 6c5d53 917c6f ac9d93 c8beb7 e3dedb " +
  "2b2200 554400 806600 aa8800 d4aa00 ffcc00 ffd42a ffdd55 ffe680 ffeeaa fff6d5 28220b 504416 786721 a0892c c8ab37 d3bc5f decd87 e9ddaf").split(" ");
const Status = styled.footer`height: 34px; flex: none; display: flex; align-items: center;`;
const Stack2 = styled.div<{ $w: number; $gap: number; $wide?: boolean }>`
  width: ${p => p.$w}px; flex: none; display: grid; grid-template-columns: ${p => p.$gap}px 1fr; row-gap: 5px; font-size: 12.500px; padding-bottom: 2px;
  letter-spacing: ${p => (p.$wide ? 0.200 : -0.500)}px;
`;
const Message = styled.div`flex: 1; padding-left: 2px; font-size: 13px; letter-spacing: 0.300px; padding-bottom: 1px;`;
const LayerName = styled.span`font-weight: 600; font-size: 11px; letter-spacing: -0.500px;`;

const rulerH = Array.from({ length: 22 }, (_, i) => (i === 0 ? "" : String(7400 + i * 50)));
const rulerV = Array.from({ length: 13 }, (_, i) => (i === 0 ? "" : String(8500 + i * 50)));

export default function App() {
  return (
    <Window>
      <GlobalStyle />
      <TitleBar>
        <I s={16}><path d="M12 0l11 11c1 2-3 3-6 3l2 2-3 2 2 2-6 4-6-4 3-2-6-2 4-2C3 14 0 13 1 11z" fill="#111827" /><path d="M12 3l6 6-3 1-3-2-2 3-4-2z" fill="#cbd5e1" /></I>
        <TitleText>Orthography.svg - Inkscape</TitleText>
        <WinButton><I s={11}><path d="M1 12h21" stroke="#000" strokeWidth="2.200" /></I></WinButton>
        <WinButton><I s={11}><path d="M2 7h15v15H2zM7 7V2h15v15h-5" stroke="#000" strokeWidth="2.200" /></I></WinButton>
        <WinButton><I s={11}><path d="M1 1l22 22M23 1L1 23" stroke="#000" strokeWidth="2.200" /></I></WinButton>
      </TitleBar>
      <MenuBar>{"File Edit View Layer Object Path Text Filters Extensions Help".split(" ").map(m => <span key={m}>{m}</span>)}</MenuBar>
      <ControlBar>
        {topIcons1.map((x, i) => <Slot $w={37.3} key={i}>{x}</Slot>)}
        <VSep />
        {topIcons2.map((x, i) => <Slot $w={37} key={i}>{x}</Slot>)}
        <VSep $l={6} />
        {topIcons3.map((x, i) => <Slot $w={36.8} key={i}>{x}</Slot>)}
        <VSep $l={6.8} $r={0} />
        <FieldLabel $w={23} $dim>X:</FieldLabel><Spin w={126} v="0.000" kw={17} dim />
        <FieldLabel $w={20} $dim>Y:</FieldLabel><Spin w={126} v="0.000" kw={17} dim />
        <FieldLabel $w={24} $dim>W:</FieldLabel><Spin w={122} v="0.000" kw={17} dim />
        <Slot $w={45}><I s={17}><path d="M2 11h14v12H2z" fill={W} /><path d="M13 12V6c0-5 8-5 8 0v3" stroke={W} strokeWidth="2.500" /></I></Slot>
        <FieldLabel $w={15} $dim>H:</FieldLabel><Spin w={122} v="0.000" kw={17} dim />
        <Slot $w={4} />
        <Combo $w={62}><span>px</span><Down /></Combo>
        <VSep />
        <ToggleRow>{affect.map((x, i) => <Toggle $w={36} $h={34} key={i}>{x}</Toggle>)}</ToggleRow>
      </ControlBar>

      <Main>
        <Toolbox>{tools.map((t, i) => t === null ? <HSep key={i} /> : <ToolButton key={i} $on={i === 0}>{t}</ToolButton>)}</Toolbox>
        <CanvasArea>
          <Corner><Lock s={16} /></Corner>
          <HRuler>{rulerH.map((n, i) => <HCell key={i}>{n}</HCell>)}<HMark /></HRuler>
          <Corner><I s={17}><circle cx="11.500" cy="11.500" r="11" fill={W} /><path d="M17 17l5 5" stroke={W} strokeWidth="5" /><path d="M5 9l2.500-2v9M14.500 9L17 7v9" stroke="#222" strokeWidth="1.800" /><path d="M11 9v2M11 13v2" stroke="#222" strokeWidth="2" /></I></Corner>
          <VRuler>{rulerV.map((n, i) => <VCell key={i}>{n.split("").map((d, j) => <span key={j}>{d}</span>)}</VCell>)}<VMark /></VRuler>
          <Page>
            <Strokes viewBox="69 106 1483 848"><path d="M69 768.500h1483" stroke="#666" strokeWidth="3" /></Strokes>
            {letters.map(([x, y, s, t, b, sx], i) => <Letter key={i} $x={x} $y={y} $s={s} $b={b} $sx={sx}>{t}</Letter>)}
            {notes.map(([x, y, t, ls], i) => <Note key={i} $x={x} $y={y} $ls={ls}>{t}</Note>)}
            <Strokes viewBox="69 106 1483 848">
              <g stroke="#ad5014" strokeWidth="1.500">
                <path d="M317.500 106L322 872.500M415.500 106l38.500 240v526.500M464 669.500l124 44.500v154.500" />
                <path d="M916.500 106l-1 224M915 364l-3 511M961 106l57 648v113.500" />
                <path d="M1062 106l97 104.500v7M1159 253v103M1159 390v105M1159 530v337" />
                <path d="M1293.500 106v243M1293.500 382v314M1293.500 732v134" />
              </g>
              <g transform="scale(1.2245)" stroke="#0c0c0c" strokeWidth="1.700" strokeLinecap="round" strokeLinejoin="round">
                <path d="M362 299c-3 4-2 10 1 13l3-1M362 299c3-4 8-2 8 2 0 2-1 3-2 4M370 302c1-5 8-6 10-2 1 4 0 8-1 13" />
                <path d="M398 313c-7-3-5-13 2-13 6 0 6 9 4 12M406 302c4-5 13-4 16 2 2 5-2 10-6 9M406 302l3 4" />
                <path d="M440 311c-3-4 0-9 4-9s6 4 5 9M449 304c3-4 10-3 11 2 1 4-2 6-4 6" />
                <path d="M397 336c-5-2-4-10 2-11 5 0 7 6 5 11M405 328c4-4 13-4 15 2 1 4-3 7-6 6" />
                <path d="M440 334c-4-4-2-9 3-10 4 0 6 4 5 9M449 325c4-5 11-3 11 3 0 4-4 7-7 6" />
                <path strokeWidth="2.200" d="M706 283c3-4 8-5 9-2 1 4-3 8-5 12-2 3-4 1-2-1 3-3 7-4 10-9 2-4 6-5 7-2 1 4-4 8-5 14M720 280l6-2" />
                <path strokeWidth="2" d="M737 282c5-5 13-5 14-2 1 5-2 8-3 15M737 282l4 2c0 3-4 6-4 10l4-2M753 295v3" />
                <path strokeWidth="2.200" d="M936 203c2-3 4-6 4-9l-4-3c2-6 7-8 13-8 8 0 9 2 7 8l-4 12" />
                <path strokeWidth="1.900" d="M934 315c2-3 4-8 3-12l-3-4c4-5 13-6 16-2 2 5 1 12 2 18" />
                <path strokeWidth="1.900" d="M936 416c2-4 12-5 14-1 1 5 0 11-1 16M936 416c0 4 4 3 5 7 0 5-3 8-5 7-2-3 3-5 5-2" />
                <path strokeWidth="2.200" d="M1049 296c2-4 6-4 8-2s5 1 7-1M1054 296c0 4-1 8-5 10M1052 300c4-1 8 0 11-3M1060 298c0 4 1 8 5 9" />
                <path strokeWidth="2.200" d="M1048 579c2-4 6-4 8-2s5 1 7-1M1053 579c0 5-1 9-4 12M1051 583c4-1 8 0 11-3M1059 581c-1 4 1 8 3 11" />
              </g>
            </Strokes>
          </Page>
          <Scroll $v><Thumb $w={6} $h={40} /></Scroll>
          <Scroll />
          <Scroll><Thumb $w={40} $h={6} /></Scroll>
          <Corner><I s={16}><circle cx="12" cy="6.500" r="5" stroke="#8a8a8a" strokeWidth="2" /><circle cx="6.500" cy="17" r="5" stroke="#8a8a8a" strokeWidth="2" fill="#14591a" /><circle cx="17.500" cy="17" r="5" stroke="#8a8a8a" strokeWidth="2" fill="#82204f" /></I></Corner>
        </CanvasArea>

        <Dock>
          <DockHead>
            {objectsIcon}<span>Objects</span><Grow />
            <DockBtns>
              <I s={11}><rect x="1" y="1" width="22" height="22" rx="3" stroke="#999" strokeWidth="2.500" /><path d="M16 6v12l-9-6z" fill="#aaa" /></I>
              <I s={11}><rect x="1" y="1" width="22" height="22" rx="3" stroke="#999" strokeWidth="2.500" /><path d="M7 7l10 10M17 7L7 17" stroke="#bbb" strokeWidth="4" /></I>
            </DockBtns>
          </DockHead>
          <DockBody>
            <Tree>
              <TreeRow $head>{["V", "L", "T", "CM", "HL", "Label"].map(h => <Cell $head key={h}>{h}</Cell>)}</TreeRow>
              {["Brahmi", "Tai Le"].map(n => (
                <TreeRow key={n}>
                  <Cell>{Eye}</Cell><Cell><Lock /></Cell><Cell>{LayersIco}</Cell><Cell /><Cell><Swatch $c="#f00" /></Cell>
                  <Cell><I s={11}><path d="M5 2l12 10L5 22z" fill="#b9b9b9" /></I><RowName>{n}</RowName></Cell>
                </TreeRow>
              ))}
            </Tree>
            <LayerButtons>
              <I><path d="M3 12h18M12 3v18" stroke={W} strokeWidth="3.500" /></I>
              <I><path d="M2 12h20" stroke={W} strokeWidth="3.500" /></I>
              <I><path d="M0 3h10v3H0zM0 11h10v3H0z" fill={DIM} /><path d="M10 20h14v3H10z" fill={W} /><path d="M22 2l-6 6 6 6" stroke={GR} strokeWidth="4" /></I>
              <I><path d="M0 2h24M2 20L12 9l10 11" stroke={W} strokeWidth="3.500" /></I>
              <I><path d="M2 18L12 7l10 11" stroke={W} strokeWidth="3.500" /></I>
              <I><path d="M2 6l10 11L22 6" stroke={W} strokeWidth="3.500" /></I>
              <I><path d="M0 22h24M2 4l10 11L22 4" stroke={W} strokeWidth="3.500" /></I>
            </LayerButtons>
            <BlendRow><span>Blend mode:</span><Combo $w={107} $pad={11}><span>Normal</span><Down /></Combo></BlendRow>
            <Rule />
            <SliderRow>
              <SliderBar>Blur (%)</SliderBar><SliderNum>0.0</SliderNum>
              <SpinKey $w={17}><Minus c="#5e5e5e" /></SpinKey><SpinKey $w={17}><Plus /></SpinKey>
            </SliderRow>
            <SliderRow>
              <SliderBar $on>Opacity (%)</SliderBar><SliderNum>100.0</SliderNum>
              <SpinKey $w={17}><Minus /></SpinKey><SpinKey $w={17}><Plus c="#5e5e5e" /></SpinKey>
            </SliderRow>
          </DockBody>
        </Dock>

        <BarCol $w={49} $p={5}>
          {cmds.map((c, i) => c === null ? <HSep key={i} $w={36} /> : <BarBtn key={i}>{c}</BarBtn>)}
          <ColGap />
          <BarBtn><I s={12}><path d="M6 2l11 10L6 22z" fill={W} /></I></BarBtn>
        </BarCol>
        <BarCol $w={40} $p={0}>
          {snaps.map((c, i) => c === null ? <HSep key={i} $w={36} /> : <BarBtn key={i} $on={c[1]}>{c[0]}</BarBtn>)}
        </BarCol>
      </Main>

      <PaletteRow>
        <PaletteCol>
          <Chips>
            <NoneChip viewBox="0 0 19 21"><path d="M0 0h19v21H0z" fill="#fff" /><path d="M0 0l19 21M19 0L0 21" stroke="#6b0a0a" strokeWidth="1.300" /></NoneChip>
            {palette.map((c, i) => <Chip key={i} $c={"#" + c} />)}
          </Chips>
          <PaletteThumb />
        </PaletteCol>
        <PaletteMenu><I s={11}><path d="M17 0v24L5 12z" fill={W} /></I></PaletteMenu>
      </PaletteRow>

      <Status>
        <Slot $w={2} />
        <Stack2 $w={64} $gap={40}><span>Fill:</span><span>N/A</span><span>Stroke:</span><span>N/A</span></Stack2>
        <FieldLabel $w={14}>O:</FieldLabel>
        <Spin w={68} v="100" kw={17} dim />
        <VSep $l={42} $r={0} />
        <Slot $w={38}>{Eye}</Slot>
        <Toggle $w={34} $h={34}><Lock s={17} /></Toggle>
        <Slot $w={1} />
        <Combo $w={124} $pad={11}><LayerName>•[Pallava]</LayerName><Down /></Combo>
        <Message>No objects selected. Click, Shift+click, Alt+scroll mouse on top of objects, or drag around objects to select.</Message>
        <VSep $l={0} $r={10} />
        <Stack2 $w={74} $gap={21} $wide><span>X:</span><span>8378.57</span><span>Y:</span><span>8872.86</span></Stack2>
        <FieldLabel $w={27}>Z:</FieldLabel>
        <Spin w={100} v="140%" kw={21} center fill />
        <FieldLabel $w={30}>R:</FieldLabel>
        <Spin w={108} v="0.00°" kw={21} center fill />
        <Slot $w={11} />
      </Status>
    </Window>
  );
}
